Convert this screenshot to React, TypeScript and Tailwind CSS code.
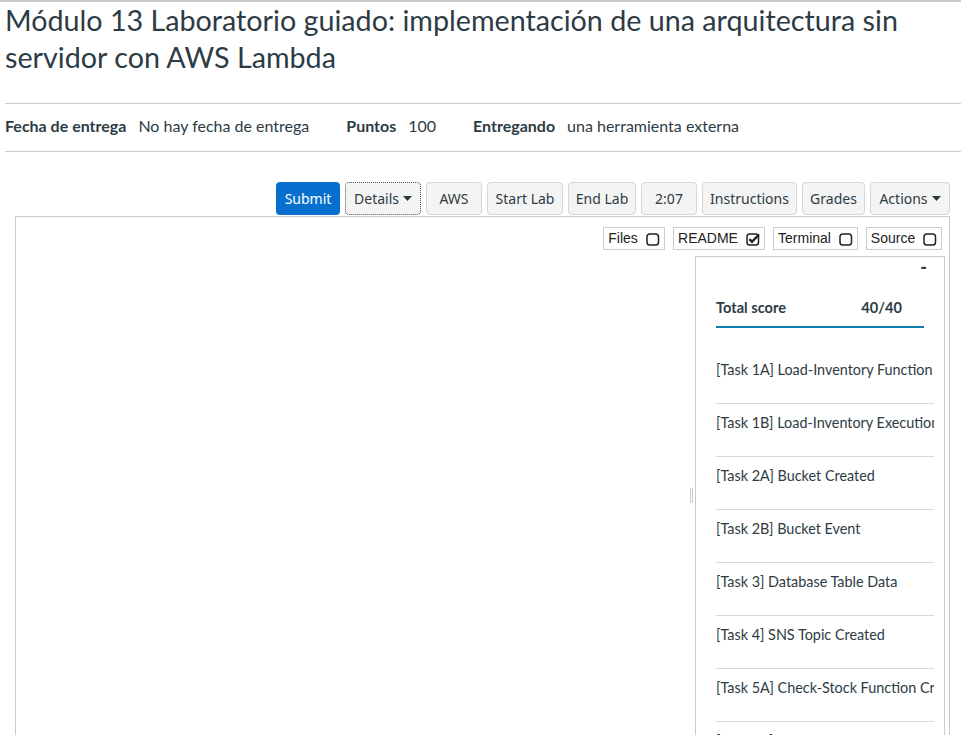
import React from "react";

const lato = { fontFamily: "Lato, 'Noto Sans', sans-serif" };

const buttons = [
  { label: "Details", w: "w-[76px]", caret: true, focus: true },
  { label: "AWS", w: "w-[56px]" },
  { label: "Start Lab", w: "w-[76px]" },
  { label: "End Lab", w: "w-[68px]" },
  { label: "2:07", w: "w-[56px]" },
  { label: "Instructions", w: "w-[95px]" },
  { label: "Grades", w: "w-[63px]" },
  { label: "Actions", w: "w-[80px]", caret: true },
];

const toggles = [
  { label: "Files", w: "w-[62px]", checked: false },
  { label: "README", w: "w-[92px]", checked: true },
  { label: "Terminal", w: "w-[85px]", checked: false },
  { label: "Source", w: "w-[76px]", checked: false },
];

const tasks = [
  "[Task 1A] Load-Inventory Function",
  "[Task 1B] Load-Inventory Execution",
  "[Task 2A] Bucket Created",
  "[Task 2B] Bucket Event",
  "[Task 3] Database Table Data",
  "[Task 4] SNS Topic Created",
  "[Task 5A] Check-Stock Function Created",
  "[Task 5B] Check-Stock Execution",
];

function Caret() {
  return (
    <svg width="9" height="5" viewBox="0 0 9 5" className="ml-[4px]">
      <path d="M0 0h9L4.5 5z" fill="#2d3b45" />
    </svg>
  );
}

function Box({ checked }: { checked: boolean }) {
  return (
    <svg width="14" height="14" viewBox="0 0 14 14" className="ml-[8px]">
      <rect x="1" y="2" width="11.5" height="11" rx="2.8" fill="none" stroke="#222" strokeWidth="1.5" />
      {checked && <path d="M3.4 7.2l2.6 2.6 7-7.3" fill="none" stroke="#222" strokeWidth="2.4" />}
    </svg>
  );
}

export default function App() {
  return (
    <div className="w-[966px] h-[748px] bg-white text-[#2d3b45]">
      <div className="h-[735px] overflow-hidden">
        <div className="w-[961px] border-t-2 border-[#c7cdd1]">
          <div className="pl-[5px]">
            <h1 className="text-[28.7px] leading-[37px] font-normal" style={lato}>
              Módulo 13 Laboratorio guiado: implementación de una arquitectura sin servidor con AWS Lambda
            </h1>
            <div className="mt-[27px] border-t border-[#c7cdd1]" />
            <div className="h-[47px] pb-[3px] flex items-center text-[16px]" style={lato}>
              <span className="font-bold">Fecha de entrega</span>
              <span className="ml-[12px]">No hay fecha de entrega</span>
              <span className="font-bold ml-[37px]">Puntos</span>
              <span className="ml-[12px]">100</span>
              <span className="font-bold ml-[37px]">Entregando</span>
              <span className="ml-[12px]">una herramienta externa</span>
            </div>
            <div className="border-t border-[#c7cdd1]" />
          </div>
        </div>

        <div className="ml-[15px] w-[935px] mt-[30px]" style={{ fontFamily: "'Noto Sans', 'Open Sans', sans-serif" }}>
          <div className="flex justify-end gap-[5px] text-[14px]">
            <div className="w-[64px] h-[33px] rounded-[4px] bg-[#0770cf] text-white flex items-center justify-center">
              Submit
            </div>
            {buttons.map((b) => (
              <div
                key={b.label}
                className={`${b.w} h-[33px] rounded-[4px] bg-[#f4f4f4] flex items-center justify-center ${
                  b.focus ? "border border-dotted border-[#555]" : "border border-[#d4d6d8]"
                }`}
              >
                {b.label}
                {b.caret && <Caret />}
              </div>
            ))}
          </div>

          <div className="h-[540px] border border-[#c7cdd1] mt-[1px] flex flex-col">
            <div className="flex justify-end gap-[8px] pr-[7px] pt-[10px] text-[14px] text-[#222]" style={{ fontFamily: "'Liberation Sans', Arial, sans-serif" }}>
              {toggles.map((t) => (
                <div key={t.label} className={`${t.w} h-[23px] border border-[#ccc] flex items-center justify-center`}>
                  {t.label}
                  <Box checked={t.checked} />
                </div>
              ))}
            </div>

            <div className="flex flex-1 mt-[6px] pr-[4px]">
              <div className="flex-1 flex items-center justify-end pr-[2px]">
                <div className="flex gap-[1px] mt-[-40px]">
                  <div className="w-px h-[15px] bg-[#c7cdd1]" />
                  <div className="w-px h-[15px] bg-[#c7cdd1]" />
                </div>
              </div>
              <div className="w-[250px] border border-[#c7cdd1] border-b-0 pl-[20px]" style={lato}>
                <div className="flex justify-end pr-[17px] h-[21px] leading-[21px] text-[18px] font-black">-</div>
                <div className="w-[208px] mt-[10px] pt-[10px] pb-[8px] leading-[20px] flex items-center justify-between pr-[22px] text-[14.6px] font-bold border-b-2 border-[#0e7fad]">
                  <span>Total score</span>
                  <span>40/40</span>
                </div>
                <div className="w-[218px] overflow-hidden mt-[23px] text-[14.4px]">
                  {tasks.map((t) => (
                    <div key={t} className="h-[53px] pt-[9px] leading-[20px] whitespace-nowrap border-b border-[#d5d9dc]">
                      {t}
                    </div>
                  ))}
                </div>
              </div>
            </div>
          </div>
        </div>
      </div>
    </div>
  );
}
